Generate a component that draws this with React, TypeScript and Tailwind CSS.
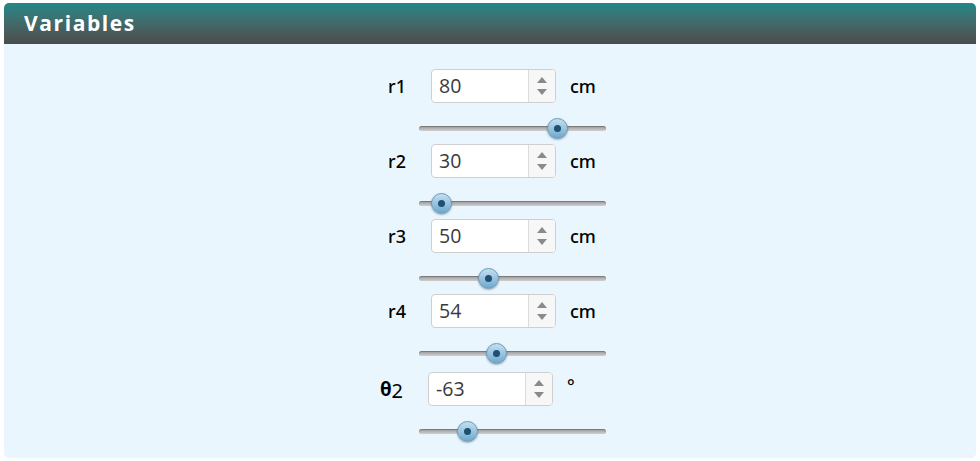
import React from 'react';

interface Variable {
  id: string;
  label: React.ReactNode;
  value: number;
  unit: string;
  thumb: number; // thumb centre offset on the 187px track
  theta?: boolean;
}

const variables: Variable[] = [
  { id: 'r1', label: 'r1', value: 80, unit: 'cm', thumb: 138 },
  { id: 'r2', label: 'r2', value: 30, unit: 'cm', thumb: 22 },
  { id: 'r3', label: 'r3', value: 50, unit: 'cm', thumb: 69 },
  { id: 'r4', label: 'r4', value: 54, unit: 'cm', thumb: 77 },
  {
    id: 'theta2',
    label: (
      <span>
        <span className="font-bold text-[19px]">θ</span>
        <sub className="text-[20px] font-normal relative top-[2px]">2</sub>
      </span>
    ),
    value: -63,
    unit: '°',
    thumb: 48,
    theta: true,
  },
];

function NumberInput({ value }: { value: number }) {
  return (
    <div className="flex h-[34px] w-[125px] rounded-[4px] border border-[#cfcfcf] bg-white overflow-hidden">
      <div className="flex-1 flex items-center pl-[7px] text-[19.5px] text-[#3a3a3a] font-['Open_Sans',sans-serif]">
        {value}
      </div>
      <div className="w-[27px] flex flex-col items-center justify-center gap-[6px] border-l border-[#dcdcdc] bg-[#f7f7f7]">
        <svg width="10" height="6" viewBox="0 0 10 6">
          <path d="M5 0 L10 6 L0 6 Z" fill="#8a8a8a" />
        </svg>
        <svg width="10" height="6" viewBox="0 0 10 6">
          <path d="M0 0 L10 0 L5 6 Z" fill="#8a8a8a" />
        </svg>
      </div>
    </div>
  );
}

function Slider({ thumb }: { thumb: number }) {
  return (
    <div className="relative ml-[53px] w-[187px] h-[20px] flex items-center">
      <div className="w-full h-[5px] rounded-full bg-gradient-to-b from-[#9a9a9a] to-[#cfcfcf] shadow-[inset_0_1px_1px_rgba(0,0,0,0.25)]" />
      <div
        className="absolute -top-[0.5px] w-[21px] h-[21px] rounded-full border border-[#6a99b8] bg-gradient-to-b from-[#c2e0f2] to-[#6fa8cc] shadow-[0_1px_2px_rgba(0,0,0,0.3)] flex items-center justify-center"
        style={{ left: thumb - 10.5 }}
      >
        <div className="w-[7px] h-[7px] rounded-full bg-[#20506f]" />
      </div>
    </div>
  );
}

export default function App() {
  return (
    <div className="w-[980px] h-[461px] bg-white pt-[3px] px-[4px] font-['Open_Sans',sans-serif]">
      <div className="rounded-[5px] overflow-hidden">
        <div className="h-[41px] flex items-center pl-[20px] bg-gradient-to-b from-[#1f8888] to-[#4b4b4b]">
          <h2 className="text-white font-bold text-[21px] tracking-[1.6px]">Variables</h2>
        </div>
        <div className="h-[414px] bg-[#eaf6fe] pt-[25px]">
          <div className="ml-[362px] w-[240px] flex flex-col">
            {variables.map((v) => (
              <div key={v.id} className="flex flex-col">
                <div className={`flex items-center ${v.theta ? 'mt-[3px]' : ''}`}>
                  <div
                    className={`${v.theta ? 'w-[37px]' : 'w-[40px]'} text-right text-[18px] font-medium text-black font-['Noto_Sans',sans-serif]`}
                  >
                    {v.label}
                  </div>
                  <div className="ml-[25px]">
                    <NumberInput value={v.value} />
                  </div>
                  <div
                    className={`ml-[14px] text-[18px] font-medium text-black font-['Noto_Sans',sans-serif] ${v.theta ? '-mt-[6px]' : ''}`}
                  >
                    {v.unit}
                  </div>
                </div>
                <div className="mt-[15px] mb-[6px]">
                  <Slider thumb={v.thumb} />
                </div>
              </div>
            ))}
          </div>
        </div>
      </div>
    </div>
  );
}
